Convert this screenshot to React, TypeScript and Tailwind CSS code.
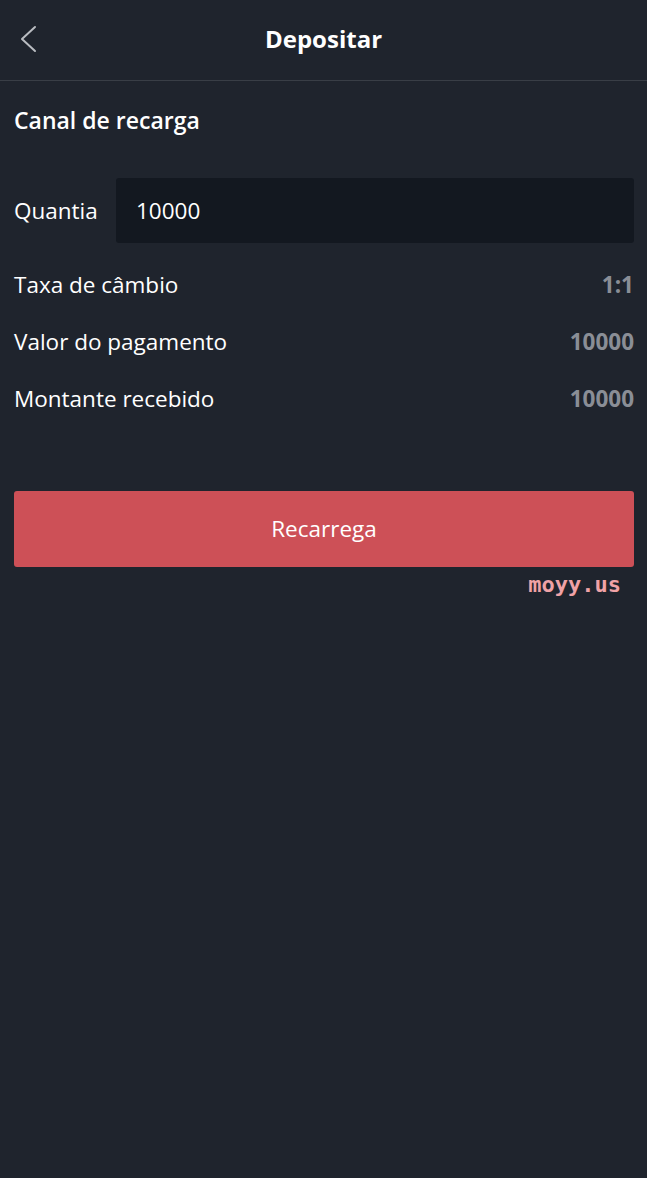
const rows = [
  { label: "Taxa de câmbio", value: "1:1" },
  { label: "Valor do pagamento", value: "10000" },
  { label: "Montante recebido", value: "10000" },
]

export default function App() {
  return (
    <div className="min-h-screen bg-[#1f242d] text-white font-['Open_Sans',sans-serif]">
      {/* Header */}
      <div className="relative h-[81px] flex items-center justify-center border-b border-[#393e46]">
        <button className="absolute left-[18px] top-[25px]">
          <svg width="20" height="28" viewBox="0 0 20 28" fill="none">
            <path d="M17 2 L4 14 L17 26" stroke="#b9bcc1" strokeWidth="2" strokeLinecap="round" strokeLinejoin="round" />
          </svg>
        </button>
        <span className="text-[24px] font-bold -mt-[3px]">Depositar</span>
      </div>

      <div className="pl-[14px] pr-[13px]">
        <div className="pt-[23px] text-[23px] font-semibold leading-[32px]">Canal de recarga</div>

        {/* Amount */}
        <div className="mt-[42px] flex items-center">
          <span className="w-[102px] text-[22.5px]">Quantia</span>
          <div className="flex-1 h-[65px] rounded-[3px] bg-[#131820] flex items-center px-[20px] text-[22.5px]">
            10000
          </div>
        </div>

        {/* Info rows */}
        <div className="mt-[13px]">
          {rows.map((r) => (
            <div key={r.label} className="h-[57px] flex items-center justify-between text-[22.5px]">
              <span>{r.label}</span>
              <span className="font-bold text-[#8a8e96]">{r.value}</span>
            </div>
          ))}
        </div>

        <button className="mt-[64px] w-full h-[76px] rounded-[3px] bg-[#cd5057] text-[22.5px]">Recarrega</button>

        <div className="flex justify-end pr-[13px] mt-[1px]">
          <span className="font-['DejaVu_Sans_Mono',monospace] font-bold text-[22px] text-[#f0a2a6]">moyy.us</span>
        </div>
      </div>
    </div>
  )
}
